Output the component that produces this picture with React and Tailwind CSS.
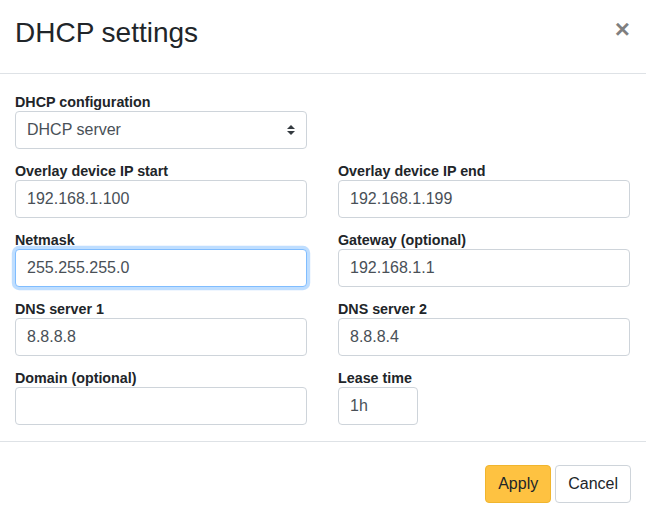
import React from "react";

const FONT = { fontFamily: '"Liberation Sans", Arial, sans-serif' };

function Field({ label, value, width = "w-full", focused = false, select = false }) {
  return (
    <div className="mb-[10px]">
      <label className="block h-[21px] text-[14.3px] leading-[24px] font-bold text-[#212529]">
        {label}
      </label>
      <div
        className={`relative flex items-center h-[38px] ${width} rounded-[4px] border bg-white px-[11px] text-[16px] text-[#495057] ${
          focused
            ? "border-[#80bdff] shadow-[0_0_0_3.2px_rgba(0,123,255,0.25)]"
            : "border-[#ced4da]"
        }`}
      >
        <span>{value}</span>
        {select && (
          <svg
            className="absolute right-[11px] top-1/2 -translate-y-1/2"
            width="8"
            height="10"
            viewBox="0 0 4 5"
          >
            <path d="M2 0L0 2h4zm0 5L0 3h4z" fill="#343a40" />
          </svg>
        )}
      </div>
    </div>
  );
}

export default function App() {
  return (
    <div className="w-[646px] h-[518px] bg-white text-[#212529]" style={FONT}>
      {/* Header */}
      <div className="flex justify-between items-start h-[74px] border-b border-[#dee2e6] pl-[15px] pr-[16px]">
        <h4 className="pt-[17px] text-[28px] leading-[32px] font-normal">DHCP settings</h4>
        <button className="mt-[17px] text-[26px] leading-[24px] font-bold text-black/50">×</button>
      </div>

      {/* Body */}
      <div className="pt-[16px] pb-[6px] pl-[15px] pr-[16px] border-b border-[#dee2e6]">
        <div className="grid grid-cols-2 gap-x-[31px]">
          <Field label="DHCP configuration" value="DHCP server" select />
          <div />
          <Field label="Overlay device IP start" value="192.168.1.100" />
          <Field label="Overlay device IP end" value="192.168.1.199" />
          <Field label="Netmask" value="255.255.255.0" focused />
          <Field label="Gateway (optional)" value="192.168.1.1" />
          <Field label="DNS server 1" value="8.8.8.8" />
          <Field label="DNS server 2" value="8.8.8.4" />
          <Field label="Domain (optional)" value="" />
          <Field label="Lease time" value="1h" width="w-[80px]" />
        </div>
      </div>

      {/* Footer */}
      <div className="flex justify-end gap-[4px] pt-[23px] pr-[15px]">
        <button className="h-[38px] px-[12px] rounded-[4px] border border-[#f0b52e] bg-[#fec241] text-[16px] text-[#212529]">
          Apply
        </button>
        <button className="h-[38px] px-[12px] rounded-[4px] border border-[#ced4da] bg-white text-[16px] text-[#212529]">
          Cancel
        </button>
      </div>
    </div>
  );
}
